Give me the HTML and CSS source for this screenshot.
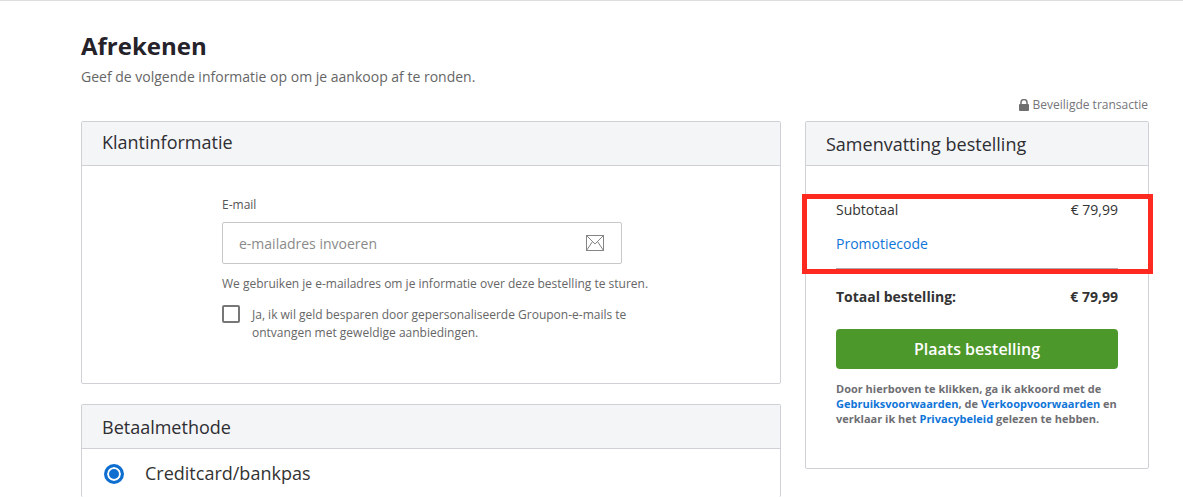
FILE: index.html
```html
<!DOCTYPE html>
<html lang="nl">
<head>
    <meta charset="UTF-8">
    <meta name="viewport" content="width=device-width, initial-scale=1.0">
    <title>Afrekenen</title>
    <link rel="stylesheet" href="styles.css">
</head>
<body>
    <div class="page">
        <h1>Afrekenen</h1>
        <p class="intro">Geef de volgende informatie op om je aankoop af te ronden.</p>
        <div class="secure">
            <svg class="lock" width="10" height="12" viewBox="0 0 10 12">
                <path d="M2 5V3.2a3 2.6 0 0 1 6 0V5" fill="none" stroke="#6e6e6e" stroke-width="1.5"/>
                <rect x="0" y="5" width="10" height="7" rx="1" fill="#6e6e6e"/>
            </svg>
            Beveiligde transactie
        </div>

        <div class="columns">
            <div class="left">
                <section class="panel customer">
                    <h2 class="panel-head">Klantinformatie</h2>
                    <div class="customer-body">
                        <label class="field-label" for="email">E-mail</label>
                        <div class="input-box">
                            <input type="text" id="email" placeholder="e-mailadres invoeren">
                            <svg width="18" height="16" viewBox="0 0 18 16">
                                <rect x="0.5" y="0.5" width="17" height="15" fill="none" stroke="#858585"/>
                                <path d="M0.5 0.5L9 9L17.5 0.5M0.5 15.5L6.5 6.5M17.5 15.5L11.5 6.5" fill="none" stroke="#858585"/>
                            </svg>
                        </div>
                        <p class="hint">We gebruiken je e-mailadres om je informatie over deze bestelling te sturen.</p>
                        <div class="optin">
                            <span class="checkbox"></span>
                            <span>Ja, ik wil geld besparen door gepersonaliseerde Groupon-e-mails te ontvangen met geweldige aanbiedingen.</span>
                        </div>
                    </div>
                </section>

                <section class="panel payment">
                    <h2 class="panel-head">Betaalmethode</h2>
                    <div class="pay-row">
                        <span class="radio"></span>
                        <span>Creditcard/bankpas</span>
                    </div>
                </section>
            </div>

            <aside class="panel summary">
                <h2 class="panel-head">Samenvatting bestelling</h2>
                <div class="summary-body">
                    <div class="line"><span>Subtotaal</span><span>€ 79,99</span></div>
                    <a class="promo" href="#">Promotiecode</a>
                    <div class="line total"><span>Totaal bestelling:</span><span>€ 79,99</span></div>
                    <button class="order-btn" type="button">Plaats bestelling</button>
                    <p class="terms">Door hierboven te klikken, ga ik akkoord met de <a href="#">Gebruiksvoorwaarden</a>, de <a href="#">Verkoopvoorwaarden</a> en verklaar ik het <a href="#">Privacybeleid</a> gelezen te hebben.</p>
                </div>
            </aside>
        </div>
    </div>
    <div class="highlight"></div>
</body>
</html>
```
FILE: styles.css
```css
/* Global */
html, body {
    height: 100%;
}

body {
    margin: 0;
    font-family: "Open Sans", sans-serif;
    color: #333;
    background-color: #fff;
    border-top: 1px solid #ddd;
    box-sizing: border-box;
    overflow: hidden;
    position: relative;
}

.page {
    width: 1068px;
    padding-left: 81px;
}

h1 {
    margin: 0;
    padding-top: 28px;
    font-size: 24px;
    line-height: 33px;
    font-weight: 700;
    color: #25222a;
}

.intro {
    margin: 5px 0 0;
    font-size: 14px;
    line-height: 20px;
    color: #666;
}

.secure {
    display: flex;
    justify-content: flex-end;
    align-items: center;
    gap: 4px;
    margin-top: 9px;
    padding-right: 1px;
    font-size: 12px;
    line-height: 17px;
    color: #75757a;
}

.columns {
    display: grid;
    grid-template-columns: 700px 344px;
    gap: 24px;
    margin-top: 8px;
}

/* Panels */
.panel {
    border: 1px solid #cfd1d6;
    border-radius: 2px;
    background-color: #fff;
}

.panel-head {
    margin: 0;
    padding: 0 20px;
    height: 43px;
    line-height: 45px;
    font-size: 18px;
    font-weight: 400;
    color: #2e2e33;
    background-color: #f4f5f7;
    border-bottom: 1px solid #cfd1d6;
}

.customer .panel-head {
    line-height: 41px;
}

.left {
    display: flex;
    flex-direction: column;
    gap: 20px;
}

/* Customer */
.customer-body {
    padding: 30px 0 38px 140px;
    height: 149px;
}

.field-label {
    display: block;
    font-size: 12px;
    line-height: 17px;
    color: #555;
}

.input-box {
    display: flex;
    align-items: center;
    width: 400px;
    height: 42px;
    margin-top: 9px;
    padding: 0 17px 0 16px;
    box-sizing: border-box;
    border: 1px solid #c8c8c8;
    border-radius: 2px;
}

.input-box input {
    flex: 1;
    min-width: 0;
    border: none;
    outline: none;
    padding: 0;
    font-family: "Open Sans", sans-serif;
    font-size: 14px;
    color: #333;
}

.input-box input::placeholder {
    color: #8a8a8a;
    opacity: 1;
}

.hint {
    margin: 11px 0 0;
    font-size: 12px;
    line-height: 17px;
    color: #666;
}

.optin {
    display: flex;
    gap: 12px;
    width: 420px;
    margin-top: 14px;
    font-size: 12px;
    line-height: 18px;
    color: #666;
}

.checkbox {
    flex: none;
    width: 14px;
    height: 14px;
    margin-top: -1px;
    border: 2px solid #777;
    border-radius: 2px;
}

/* Payment: the panel is cut off by the bottom of the window */
.payment {
    height: 92px;
    border-bottom: none;
}

.pay-row {
    display: flex;
    align-items: center;
    gap: 21px;
    padding: 12px 22px;
    font-size: 18px;
    line-height: 25px;
    color: #333;
}

.radio {
    flex: none;
    width: 14px;
    height: 14px;
    border: 3px solid #0f6fd1;
    border-radius: 50%;
    background-color: #0f6fd1;
    box-shadow: inset 0 0 0 2px #fff;
}

/* Summary */
.summary {
    height: 346px;
}

.summary-body {
    padding: 34px 30px 0;
}

.line {
    display: flex;
    justify-content: space-between;
    font-size: 14px;
    line-height: 20px;
    color: #333;
}

.promo {
    display: block;
    margin-top: 14px;
    padding-bottom: 14px;
    font-size: 14px;
    line-height: 20px;
    color: #0f75d8;
    text-decoration: none;
    border-bottom: 1px solid #aaa;
}

.total {
    margin-top: 18px;
    font-weight: 700;
}

.order-btn {
    display: block;
    width: 100%;
    height: 40px;
    margin-top: 22px;
    border: none;
    border-radius: 4px;
    font-family: "Open Sans", sans-serif;
    font-size: 16px;
    font-weight: 600;
    color: #fff;
    background-color: #4d982a;
}

.terms {
    margin: 12px 0 0;
    font-size: 11px;
    line-height: 15px;
    font-weight: 700;
    color: #6e6e73;
}

.terms a {
    color: #0f75d8;
    text-decoration: none;
}

/* Red annotation drawn over the screenshot */
.highlight {
    position: absolute;
    left: 802px;
    top: 193px;
    width: 351px;
    height: 80px;
    box-sizing: border-box;
    border: 5px solid #ff2a1f;
}
```
